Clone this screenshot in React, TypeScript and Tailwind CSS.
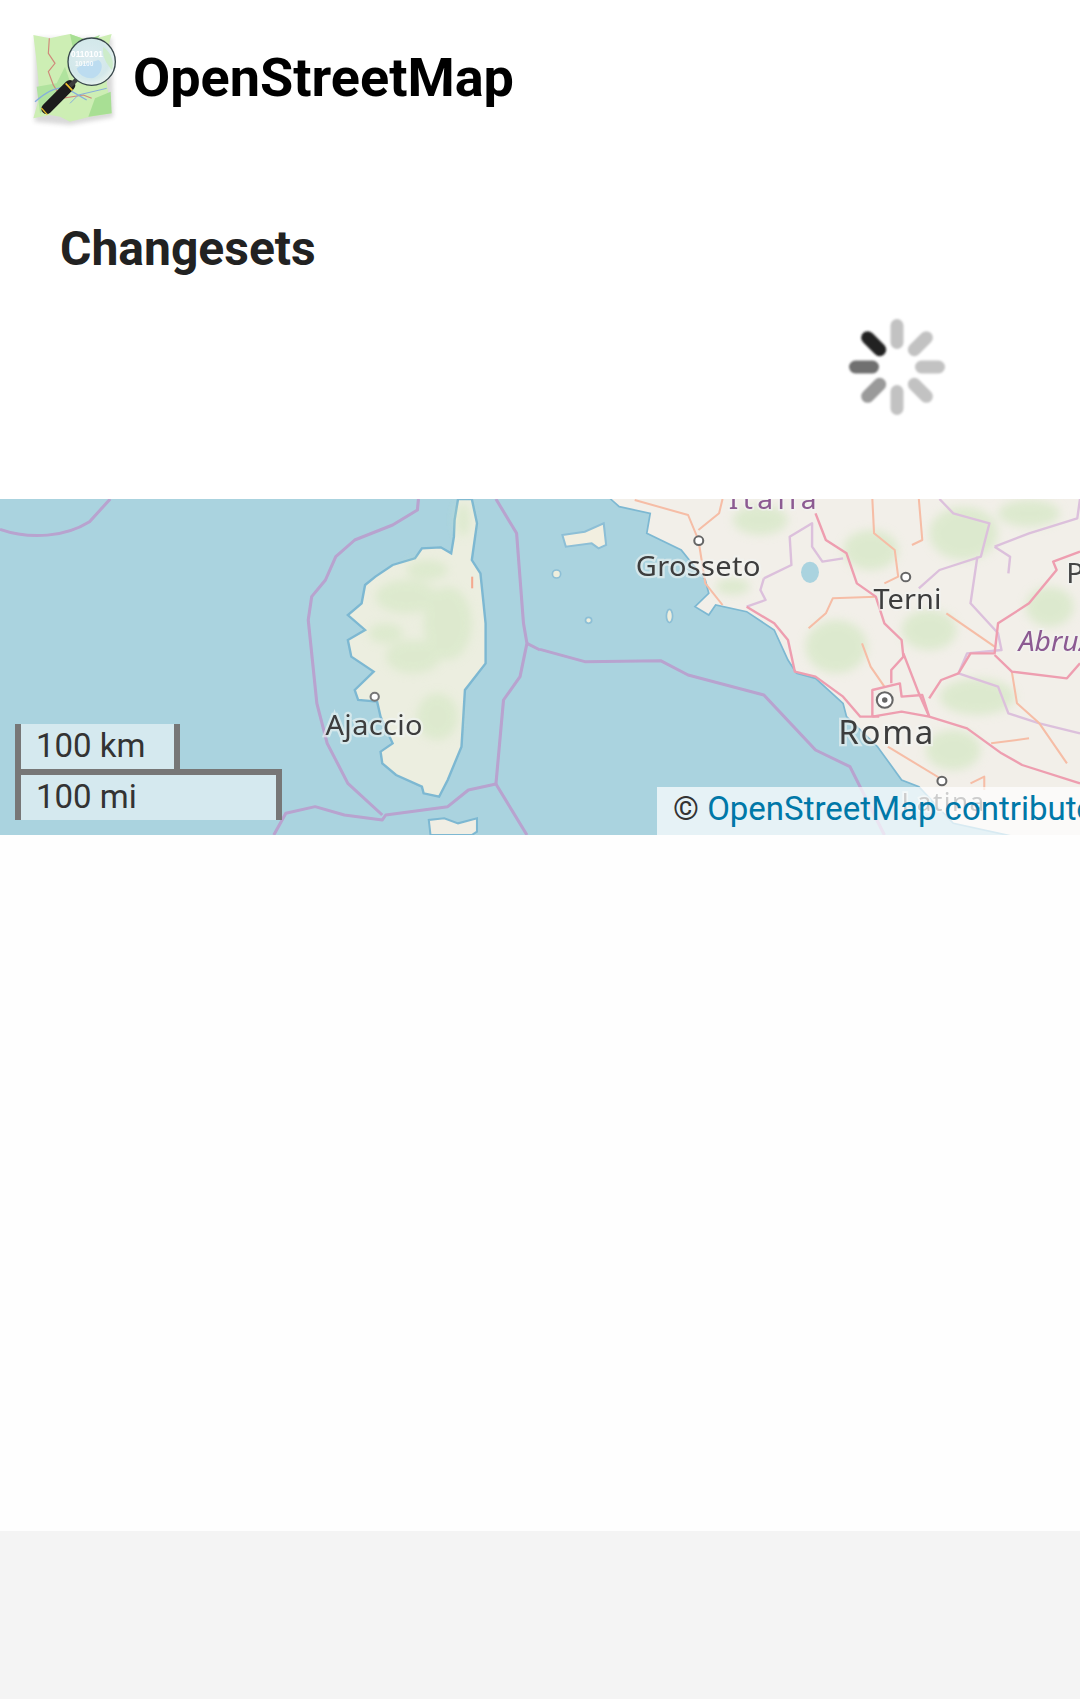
import React from 'react';

const ROADS = [
  'M600,350 L680,400 720,450 740,545 800,560 880,620 930,680 985,680',
  'M800,70 L830,150 890,190 920,280 975,320 1000,400 1050,450 1055,500 1020,540 1020,580',
  'M1055,490 L1100,610 1130,680',
  'M965,680 L965,600 1045,580 1050,620 1110,615 1130,680 1050,665 965,680',
  'M1130,625 L1165,570 1215,550 1250,490 1320,490 1330,400 1420,340 1500,240 1490,215 1568,185',
  'M1130,680 L1240,715 1340,790 1400,825 1568,880',
  'M1320,495 L1370,545 1530,565 1568,520',
];

const MINOR_ROADS = [
  'M780,415 L830,370 850,325 975,320',
  'M965,27 L970,130 1030,180 1040,260 1000,280',
  'M1100,27 L1110,150 1080,165',
  'M935,460 L960,530 1000,590',
  'M275,30 L430,75 460,150 480,280 530,345',
  'M530,27 L520,70 460,120',
  'M1010,770 L1170,870',
  'M1310,760 L1420,745',
  'M1370,545 L1385,640 1450,700 1530,820',
  'M1180,370 L1320,470',
  'M1250,880 L1290,860 1290,900',
];

const ADMIN = [
  'M650,265 L730,225 725,140 790,100 790,170 820,215 880,205',
  'M650,265 L640,300 655,330 600,350',
  'M1100,295 L1160,240 1280,200 1305,100 1200,70 1160,27',
  'M1320,170 L1365,200 1360,250',
  'M1270,200 L1250,340 1330,430 1340,480 1240,490 1215,550 1330,590 1360,670 1450,700 1568,730',
  'M1320,170 L1420,130 1560,85 1568,27',
];

function MapTiles() {
  return (
    <svg className="block w-full h-full" viewBox="0 0 1080 336">
      <defs>
        <filter id="soft"><feGaussianBlur stdDeviation="0.8" /></filter>
        <filter id="wood"><feGaussianBlur stdDeviation="14" /></filter>
      </defs>
      <rect width="1080" height="336" fill="#aad3df" />

      {/* west half, corsica */}
      <g transform="translate(0,-9) scale(0.3444,0.33333)" filter="url(#soft)">
        <path
          d="M1330,27 L1320,90 1318,140 1310,190 1280,172 1225,175 1205,205 1140,225 1090,260 1060,285 1050,340 1010,375 1060,420 1010,450 1020,500 1085,545 1030,600 1040,630 1095,635 1105,680 1140,760 1105,785 1110,820 1150,855 1225,890 1230,910 1275,920 1300,870 1340,770 1350,600 1410,520 1410,400 1395,250 1370,210 1385,100 1370,27 Z"
          fill="#eceee0"
          stroke="#7db8d2"
          strokeWidth="7"
        />
        <g fill="#cfe6bd" opacity="0.5" filter="url(#wood)">
          <ellipse cx="1180" cy="320" rx="90" ry="50" />
          <ellipse cx="1300" cy="400" rx="70" ry="110" />
          <ellipse cx="1200" cy="500" rx="80" ry="50" />
          <ellipse cx="1270" cy="680" rx="60" ry="70" />
          <ellipse cx="1345" cy="90" rx="20" ry="50" />
          <ellipse cx="1120" cy="430" rx="50" ry="30" />
          <ellipse cx="1240" cy="240" rx="60" ry="30" />
        </g>
        <path d="M1371,260 V295" stroke="#f4a98f" strokeWidth="6" />
        <path d="M1250,1035 L1245,990 1290,985 1330,1000 1385,985 1385,1025 1370,1035 Z" fill="#f0eee4" stroke="#7db8d2" strokeWidth="6" />
        <g fill="none" stroke="#b8a3cf" strokeWidth="9" strokeLinejoin="round">
          <path d="M0,118 C90,150 190,140 260,95 L320,27" />
          <path d="M1215,27 L1212,60 1140,105 1030,150 975,200 945,270 905,320 895,390 920,640 950,760 1010,880 1110,975" />
          <path d="M795,1035 L830,970 915,950 1000,975 1110,990 1120,975 1300,950 1360,900 1440,882 L1530,1035" />
          <path d="M1440,27 L1500,130 1520,400 1530,460 1510,560 1462,630 1440,882" />
          <path d="M1530,460 L1568,480" />
        </g>
        <circle cx="1088" cy="620" r="12" fill="#fff" stroke="#777" strokeWidth="6" />
        <text
          x="945"
          y="736"
          textLength="282"
          fontFamily="'Noto Sans', sans-serif"
          fontSize="84"
          fill="#3c3c3c"
          stroke="#f2f5f3"
          strokeWidth="14"
          strokeOpacity="0.6"
          paintOrder="stroke"
        >
          Ajaccio
        </text>
      </g>

      {/* east half, italian coast */}
      <g transform="translate(540,-9) scale(0.3444,0.33333)" filter="url(#soft)">
        <path
          d="M205,27 L230,50 320,70 310,130 410,180 480,270 490,310 450,350 490,375 510,345 600,365 680,420 720,510 745,550 800,565 880,640 890,680 980,770 1050,870 1100,890 1200,1000 1400,1045 1600,1045 L1600,20 205,20 Z"
          fill="#f2efe9"
          stroke="#7db8d2"
          strokeWidth="5"
        />
        <g fill="#cfe6bd" opacity="0.6" filter="url(#wood)">
          <ellipse cx="640" cy="90" rx="80" ry="45" />
          <ellipse cx="960" cy="180" rx="80" ry="60" />
          <ellipse cx="1230" cy="130" rx="100" ry="80" />
          <ellipse cx="1420" cy="70" rx="90" ry="40" />
          <ellipse cx="860" cy="470" rx="90" ry="80" />
          <ellipse cx="1130" cy="420" rx="80" ry="60" />
          <ellipse cx="1270" cy="620" rx="110" ry="55" />
          <ellipse cx="1480" cy="350" rx="70" ry="60" />
          <ellipse cx="1200" cy="780" rx="80" ry="60" />
          <ellipse cx="560" cy="290" rx="50" ry="25" />
        </g>
        <path d="M65,135 L130,125 185,100 192,165 170,175 150,160 75,170 Z" fill="#f2efe0" stroke="#8dbfd6" strokeWidth="6" />
        <circle cx="48" cy="252" r="12" fill="#eeeedd" stroke="#8dbfd6" strokeWidth="5" />
        <circle cx="141" cy="391" r="9" fill="#eeeedd" stroke="#8dbfd6" strokeWidth="5" />
        <ellipse cx="376" cy="378" rx="9" ry="20" fill="#eeeedd" stroke="#8dbfd6" strokeWidth="5" />
        <ellipse cx="784" cy="247" rx="26" ry="32" fill="#aad3df" />
        <g fill="none" strokeLinejoin="round">
          <g stroke="#dcc0dc" strokeWidth="7">
            {ADMIN.map((d) => <path key={d} d={d} />)}
          </g>
          <g stroke="#f6bda6" strokeWidth="6">
            {MINOR_ROADS.map((d) => <path key={d} d={d} />)}
          </g>
          <g stroke="#ee9eb0" strokeWidth="7">
            {ROADS.map((d) => <path key={d} d={d} />)}
          </g>
          <path d="M0,478 L130,515 350,512 430,555 650,615 800,780 900,830 1000,1035" stroke="#b8a3cf" strokeWidth="9" />
        </g>
        <g fill="#fff" stroke="#666" strokeWidth="6">
          <circle cx="461" cy="152" r="13" />
          <circle cx="1062" cy="261" r="13" />
          <circle cx="1167" cy="873" r="13" />
          <circle cx="1001" cy="630" r="23" />
        </g>
        <circle cx="1001" cy="630" r="8" fill="#666" />
        <g fontFamily="'Noto Sans', sans-serif" stroke="#f2f4f1" strokeOpacity="0.6" paintOrder="stroke">
          <text x="548" y="56" textLength="255" fontSize="82" fill="#8c5a92" strokeWidth="10">Italia</text>
          <text x="278" y="258" textLength="362" fontSize="84" fill="#3c3c3c" strokeWidth="14">Grosseto</text>
          <text x="968" y="358" textLength="198" fontSize="84" fill="#3c3c3c" strokeWidth="10">Terni</text>
          <text x="866" y="762" textLength="276" fontSize="96" fill="#3c3c3c" strokeWidth="14">Roma</text>
          <text x="1528" y="278" fontSize="84" fill="#444" strokeWidth="10">P</text>
          <text x="1050" y="962" textLength="240" fontSize="76" fill="#555" strokeWidth="10">Latina</text>
          <text x="1390" y="482" fontSize="82" fontStyle="italic" fill="#8c5a92" strokeWidth="10">Abruzzo</text>
        </g>
      </g>
    </svg>
  );
}

function Logo() {
  return (
    <svg className="block shrink-0 w-[110px] h-[110px]" viewBox="0 0 330 330">
      <defs>
        <filter id="logoShadow"><feGaussianBlur stdDeviation="7" /></filter>
        <filter id="logoSoft"><feGaussianBlur stdDeviation="1.4" /></filter>
        <radialGradient id="lens" cx="0.45" cy="0.45" r="0.6">
          <stop offset="0" stopColor="#dcebf0" />
          <stop offset="0.7" stopColor="#d3e8ea" />
          <stop offset="1" stopColor="#eef6f0" />
        </radialGradient>
      </defs>
      <path d="M44,55 L276,55 280,292 150,315 44,305 Z" fill="#555" opacity="0.22" filter="url(#logoShadow)" />
      <g filter="url(#logoSoft)">
        <path
          d="M40,45 L90,55 120,48 150,42 200,60 240,52 275,42 262,90 268,130 260,190 275,280 210,290 150,305 120,290 90,285 40,295 58,230 55,180 48,110 Z"
          fill="#cdeeb4"
        />
        <path d="M150,42 L200,60 240,45 210,90 160,90 Z" fill="#a8df94" />
        <path d="M205,290 L275,280 272,215 225,235 Z" fill="#a8df94" />
        <path d="M50,200 L110,190 135,140 150,185 120,230 60,280 Z" fill="#b0e39e" />
        <path d="M88,55 L85,100 105,130 85,155 100,195 125,235 190,225 215,235" fill="none" stroke="#d0897a" strokeWidth="3.5" />
        <path d="M45,245 C90,205 120,200 140,205 L200,240" fill="none" stroke="#86aedc" strokeWidth="4" />
        <path d="M150,250 L175,225 260,205" fill="none" stroke="#86aedc" strokeWidth="3" />
        <path d="M150,196 L80,266" stroke="#1c1c1c" strokeWidth="32" strokeLinecap="round" />
        <path d="M137,190 L157,211" stroke="#f2c230" strokeWidth="5" />
        <path d="M64,264 L82,284" stroke="#e8c030" strokeWidth="4" />
        <path d="M172,176 L150,198" stroke="#3c3c3c" strokeWidth="13" />
        <circle cx="215" cy="125" r="71" fill="url(#lens)" stroke="#37474b" strokeWidth="4" />
        <path d="M170,145 C195,125 210,130 235,120 C255,130 245,170 215,175 C195,175 175,165 170,145 Z" fill="#bcdcf0" />
        <path d="M250,80 C275,100 285,130 275,150 C260,130 245,110 250,80 Z" fill="#cdecca" />
        <text x="153" y="112" fontFamily="'Liberation Sans', sans-serif" fontSize="25" fontWeight="700" fill="#fff">0110101</text>
        <text x="165" y="138" fontFamily="'Liberation Sans', sans-serif" fontSize="20" fontWeight="700" fill="#fff" opacity="0.8">10100</text>
      </g>
    </svg>
  );
}

const SPOKES = [
  { angle: 0, color: '#c2c2c2' },
  { angle: 45, color: '#c2c2c2' },
  { angle: 90, color: '#c2c2c2' },
  { angle: 135, color: '#c2c2c2' },
  { angle: 180, color: '#c2c2c2' },
  { angle: 225, color: '#9a9a9a' },
  { angle: 270, color: '#707070' },
  { angle: 315, color: '#222222' },
];

function Spinner() {
  return (
    <svg className="block w-[96px] h-[96px] overflow-visible" viewBox="-48 -48 96 96">
      <defs>
        <filter id="spinSoft"><feGaussianBlur stdDeviation="1.1" /></filter>
      </defs>
      <g filter="url(#spinSoft)">
        {SPOKES.map((s) => (
          <rect
            key={s.angle}
            x="-6.5"
            y="-48"
            width="13"
            height="30"
            rx="6.5"
            fill={s.color}
            transform={`rotate(${s.angle})`}
          />
        ))}
      </g>
    </svg>
  );
}

export default function App() {
  return (
    <div className="flex flex-col w-[1080px] h-[1699px] overflow-hidden bg-white font-['Roboto',sans-serif]">
      <header className="flex items-center h-[150px] pl-[20px] gap-[3px]">
        <Logo />
        <span className="text-[54px] leading-none font-bold text-black translate-y-[3px]">OpenStreetMap</span>
      </header>

      <section className="h-[349px] px-[60px] pt-[70px]">
        <h2 className="text-[48px] leading-[58px] font-bold text-[#222]">Changesets</h2>
        <div className="flex justify-end pr-[75px] mt-[41px]">
          <Spinner />
        </div>
      </section>

      <div className="relative h-[336px] overflow-hidden">
        <MapTiles />

        <div className="absolute left-[15px] bottom-[15px] flex flex-col text-[33px] leading-[43px] text-[#333]">
          <div className="w-[165px] h-[45px] pl-[15px] border-x-[6px] border-[#777] bg-white/50">100 km</div>
          <div className="w-[267px] h-[51px] pl-[15px] border-x-[6px] border-t-[6px] border-[#777] bg-white/50">100 mi</div>
        </div>

        <div className="absolute left-[657px] bottom-0 h-[48px] w-[500px] pl-[16px] bg-white/70 text-[33px] leading-[43px] whitespace-nowrap text-[#333]">
          © <span className="text-[#0078a8]">OpenStreetMap contributors</span>
        </div>
      </div>

      <div className="h-[696px] bg-[#fefefe]" />
      <footer className="flex-1 bg-[#f4f4f4]" />
    </div>
  );
}
